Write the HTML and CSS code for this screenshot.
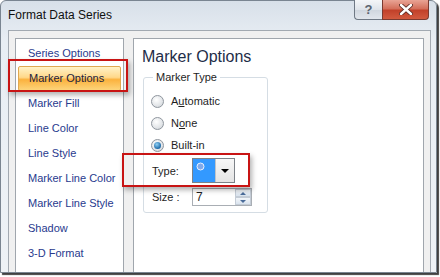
FILE: index.html
```html
<!DOCTYPE html>
<html lang="en">
<head>
    <meta charset="UTF-8">
    <title>Format Data Series</title>
    <link rel="stylesheet" href="styles.css">
</head>
<body>
    <div class="window">
        <div class="titlebar">
            <span class="title">Format Data Series</span>
            <div class="caption-buttons">
                <span class="cap-btn help">?</span>
                <span class="cap-btn close">
                    <svg width="14" height="11" viewBox="0 0 14 11">
                        <path d="M2 1 L12 10 M12 1 L2 10" stroke="#5a2a22" stroke-width="4.2" stroke-linecap="round"/>
                        <path d="M2 1 L12 10 M12 1 L2 10" stroke="#ffffff" stroke-width="2.4" stroke-linecap="round"/>
                    </svg>
                </span>
            </div>
        </div>
        <div class="client">
            <ul class="nav">
                <li>Series Options</li>
                <li class="selected">Marker Options</li>
                <li>Marker Fill</li>
                <li>Line Color</li>
                <li>Line Style</li>
                <li>Marker Line Color</li>
                <li>Marker Line Style</li>
                <li>Shadow</li>
                <li>3-D Format</li>
            </ul>
            <div class="panel">
                <h2>Marker Options</h2>
                <fieldset class="group">
                    <legend>Marker Type</legend>
                    <div class="radio-row"><span class="radio"></span><span>A<u>u</u>tomatic</span></div>
                    <div class="radio-row"><span class="radio"></span><span>N<u>o</u>ne</span></div>
                    <div class="radio-row"><span class="radio checked"></span><span>Built-in</span></div>
                    <div class="field-row type-row">
                        <span class="field-label">Type:</span>
                        <div class="combo">
                            <span class="combo-value">
                                <svg width="9" height="9" viewBox="0 0 9 9">
                                    <circle cx="4.5" cy="4.5" r="3.5" fill="#7fa9ea" stroke="#eaf2ff" stroke-width="1"/>
                                </svg>
                            </span>
                            <span class="combo-arrow"></span>
                        </div>
                    </div>
                    <div class="field-row size-row">
                        <span class="field-label">Size :</span>
                        <div class="spin">
                            <span class="spin-value">7</span>
                            <span class="spin-buttons">
                                <span class="spin-btn up"></span>
                                <span class="spin-btn down"></span>
                            </span>
                        </div>
                    </div>
                </fieldset>
            </div>
        </div>
        <div class="callout callout-nav"></div>
        <div class="callout callout-type"></div>
    </div>
</body>
</html>
```

FILE: styles.css
```css
body {
    margin: 0;
    width: 440px;
    height: 277px;
    background: #ffffff;
    overflow: hidden;
    font-family: "Liberation Sans", Arial, sans-serif;
}
.window {
    position: relative;
    box-sizing: border-box;
    width: 437px;
    height: 273px;
    border: 1px solid #7a8591;
    border-radius: 6px 6px 0 0;
    background: linear-gradient(#d8e0e9, #e8eef4 40px, #eef2f6);
    box-shadow: 2px 2px 1px rgba(0, 0, 0, 0.75);
    display: flex;
    flex-direction: column;
}
.titlebar {
    height: 29px;
    display: flex;
    align-items: flex-start;
    justify-content: space-between;
}
.title {
    margin: 7px 0 0 7px;
    font-size: 12px;
    color: #101010;
}
.caption-buttons {
    display: flex;
    margin-right: 7px;
    margin-top: -1px;
}
.cap-btn {
    height: 20px;
    display: flex;
    align-items: center;
    justify-content: center;
    border: 1px solid #6e7884;
    border-top: none;
    box-sizing: border-box;
}
.help {
    width: 28px;
    border-radius: 0 0 0 4px;
    border-right: none;
    background: linear-gradient(#f4f6f8, #dfe4ea 50%, #cfd6de 51%, #e1e6ec);
    color: #5a6470;
    font-weight: bold;
    font-size: 13px;
}
.close {
    width: 47px;
    border-radius: 0 0 4px 0;
    background: linear-gradient(#e9a495, #d4705c 45%, #c2412a 55%, #d25a3f);
    border-color: #7a3a30;
}
.client {
    flex: 1;
    margin: 0 5px 0 7px;
    border: 1px solid #a2a9b1;
    border-bottom: none;
    background: #f0f0f0;
    display: flex;
    gap: 9px;
    padding: 7px 6px 0 6px;
}
.nav {
    list-style: none;
    margin: 0;
    padding: 2px 1px 0 1px;
    width: 105px;
    background: #ffffff;
    border: 1px solid #a0a6ad;
    border-bottom: none;
}
.nav li {
    height: 25px;
    line-height: 25px;
    padding-left: 11px;
    font-size: 11px;
    color: #283a8e;
    white-space: nowrap;
}
.nav li.selected {
    margin: 0 1px;
    padding-left: 10px;
    box-sizing: border-box;
    border: 1px solid #e0a850;
    border-radius: 2px;
    line-height: 23px;
    color: #1c1c3c;
    background: linear-gradient(#fff2c8, #ffd88a 45%, #fbb23e 55%, #fdd47a);
}
.panel {
    flex: 1;
    background: #ffffff;
    border: 1px solid #a0a6ad;
    border-bottom: none;
    padding: 8px 0 0 8px;
}
h2 {
    margin: 0;
    font-size: 16px;
    font-weight: normal;
    line-height: 20px;
    color: #1e2d48;
}
.group {
    width: 125px;
    box-sizing: border-box;
    margin: 3px 0 0 1px;
    padding: 5px 0 6px 7px;
    border: 1px solid #d5dde4;
    border-radius: 3px;
    font-size: 11px;
    color: #1e1e1e;
}
.group legend {
    padding: 0 3px;
    margin-left: 2px;
    line-height: 15px;
}
.radio-row {
    height: 22px;
    display: flex;
    align-items: center;
    gap: 7px;
}
.radio {
    width: 11px;
    height: 11px;
    border-radius: 50%;
    border: 1px solid #8f969e;
    background: radial-gradient(circle at 40% 35%, #ffffff, #e2e5e8 60%, #c9cdd2);
    position: relative;
}
.radio.checked::after {
    content: "";
    position: absolute;
    left: 2px;
    top: 2px;
    width: 7px;
    height: 7px;
    border-radius: 50%;
    background: radial-gradient(circle at 40% 35%, #8fd0f4, #1d6aa8 70%, #0d4a80);
}
.field-row {
    display: flex;
    align-items: center;
}
.field-label {
    width: 40px;
    padding-left: 1px;
}
.type-row {
    height: 25px;
    margin-top: 2px;
}
.combo {
    display: flex;
    width: 43px;
    height: 25px;
    box-sizing: border-box;
    border: 1px solid #7d8288;
}
.combo-value {
    flex: 1;
    background: #3399ff;
    padding: 3px 0 0 3px;
    line-height: 0;
}
.combo-arrow {
    width: 18px;
    border-left: 1px solid #c0c4c8;
    background: linear-gradient(#f7f7f7, #e4e4e4);
    position: relative;
}
.combo-arrow::after {
    content: "";
    position: absolute;
    left: 5px;
    top: 10px;
    border-left: 4px solid transparent;
    border-right: 4px solid transparent;
    border-top: 4px solid #000000;
}
.size-row {
    height: 18px;
    margin-top: 5px;
}
.spin {
    display: flex;
    width: 60px;
    height: 18px;
    box-sizing: border-box;
    border: 1px solid #a9aeb4;
    background: #ffffff;
}
.spin-value {
    flex: 1;
    padding-left: 3px;
    line-height: 16px;
    font-size: 12px;
}
.spin-buttons {
    width: 16px;
    display: flex;
    flex-direction: column;
}
.spin-btn {
    flex: 1;
    position: relative;
    background: linear-gradient(#f3f6fa, #d9e3ee);
    border: 1px solid #c4ccd6;
}
.spin-btn::after {
    content: "";
    position: absolute;
    left: 4px;
    border-left: 3px solid transparent;
    border-right: 3px solid transparent;
}
.spin-btn.up::after {
    top: 2px;
    border-bottom: 3px solid #4a6c9a;
}
.spin-btn.down::after {
    top: 2px;
    border-top: 3px solid #4a6c9a;
}
.callout {
    position: absolute;
    border: 2px solid #c81414;
    box-shadow: 2px 3px 5px rgba(0, 0, 0, 0.3);
}
.callout-nav {
    left: 7px;
    top: 58px;
    width: 116px;
    height: 29px;
}
.callout-type {
    left: 121px;
    top: 152px;
    width: 124px;
    height: 30px;
}
```
